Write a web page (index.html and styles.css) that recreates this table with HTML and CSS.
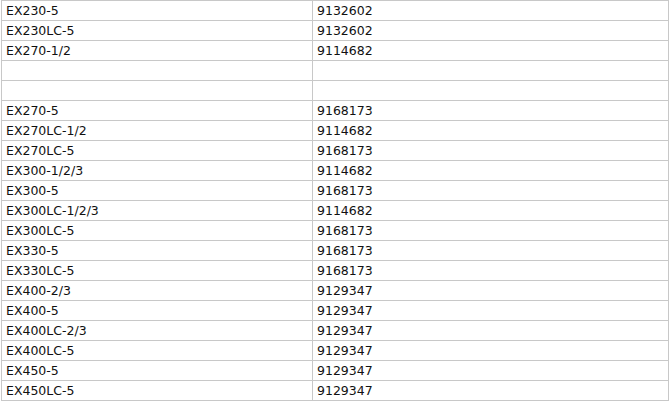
FILE: index.html
```html
<!DOCTYPE html>
<html>
<head>
<meta charset="utf-8">
<link rel="stylesheet" href="styles.css">
</head>
<body>
<div class="grid">
  <div class="cell">EX230-5</div><div class="cell">9132602</div>
  <div class="cell">EX230LC-5</div><div class="cell">9132602</div>
  <div class="cell">EX270-1/2</div><div class="cell">9114682</div>
  <div class="cell"></div><div class="cell"></div>
  <div class="cell"></div><div class="cell"></div>
  <div class="cell">EX270-5</div><div class="cell">9168173</div>
  <div class="cell">EX270LC-1/2</div><div class="cell">9114682</div>
  <div class="cell">EX270LC-5</div><div class="cell">9168173</div>
  <div class="cell">EX300-1/2/3</div><div class="cell">9114682</div>
  <div class="cell">EX300-5</div><div class="cell">9168173</div>
  <div class="cell">EX300LC-1/2/3</div><div class="cell">9114682</div>
  <div class="cell">EX300LC-5</div><div class="cell">9168173</div>
  <div class="cell">EX330-5</div><div class="cell">9168173</div>
  <div class="cell">EX330LC-5</div><div class="cell">9168173</div>
  <div class="cell">EX400-2/3</div><div class="cell">9129347</div>
  <div class="cell">EX400-5</div><div class="cell">9129347</div>
  <div class="cell">EX400LC-2/3</div><div class="cell">9129347</div>
  <div class="cell">EX400LC-5</div><div class="cell">9129347</div>
  <div class="cell">EX450-5</div><div class="cell">9129347</div>
  <div class="cell">EX450LC-5</div><div class="cell">9129347</div>
</div>
</body>
</html>
```
FILE: styles.css
```css
html, body {
  margin: 0;
  padding: 0;
  background: #ffffff;
}
body {
  font-family: "DejaVu Sans", Verdana, sans-serif;
  font-size: 12.5px;
  color: #111111;
}
.grid {
  margin-left: 1px;
  width: 668px;
  box-sizing: border-box;
  display: grid;
  grid-template-columns: 311px 356px;
  border-top: 1px solid #c8c8c8;
  border-left: 1px solid #c8c8c8;
}
.cell {
  box-sizing: border-box;
  height: 20px;
  padding: 1px 0 0 4px;
  line-height: 18px;
  border-right: 1px solid #c8c8c8;
  border-bottom: 1px solid #c8c8c8;
  white-space: nowrap;
}
```
